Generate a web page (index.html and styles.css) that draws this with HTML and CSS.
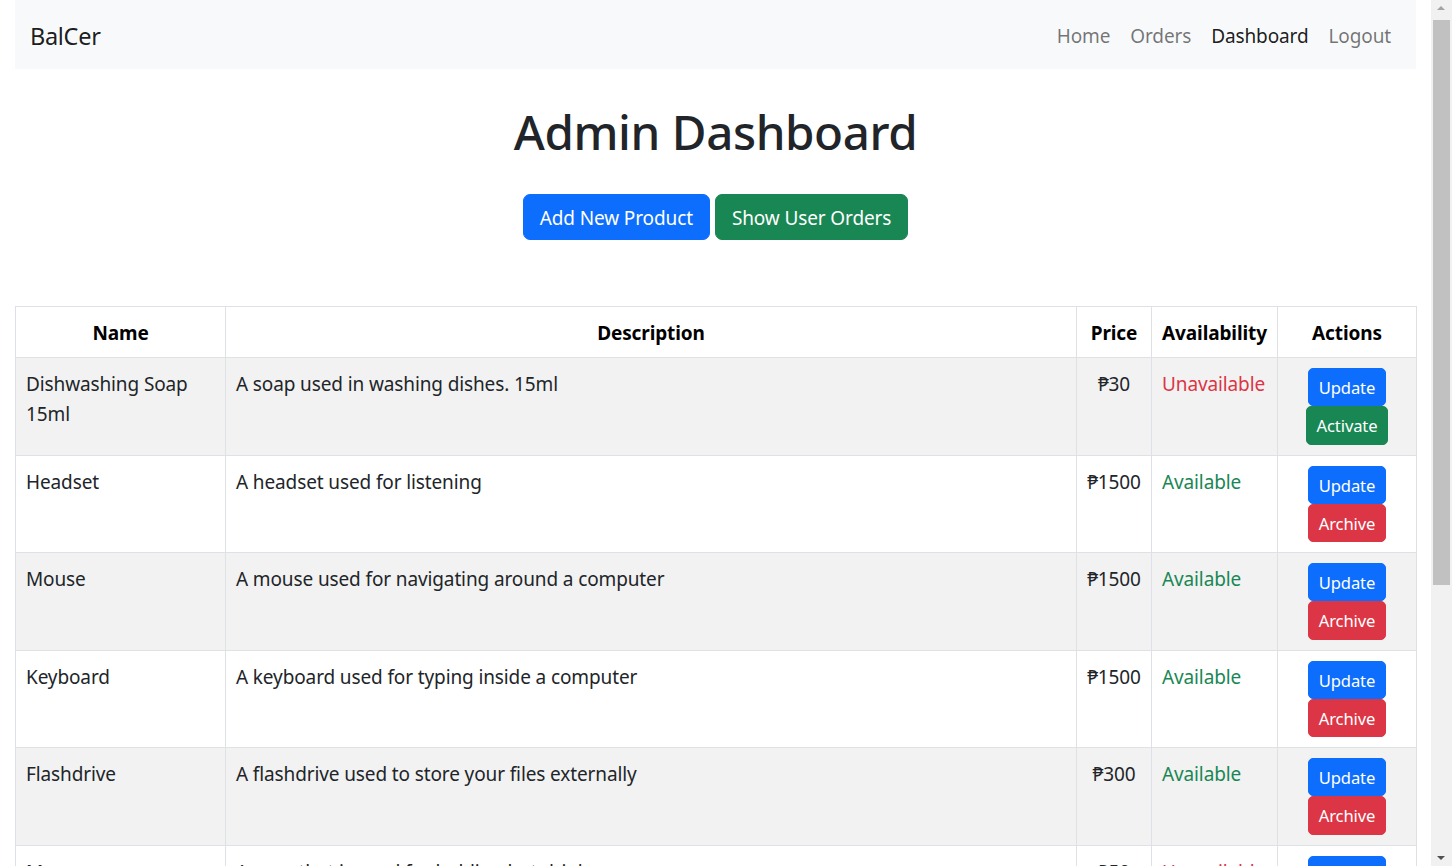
FILE: index.html
```html
<!DOCTYPE html>
<html lang="en">
<head>
<meta charset="utf-8">
<title>BalCer - Admin Dashboard</title>
<link rel="stylesheet" href="styles.css">
</head>
<body>
<div class="page">
  <nav class="navbar">
    <a class="brand" href="#">BalCer</a>
    <div class="nav-links">
      <a class="nav-link" href="#">Home</a>
      <a class="nav-link" href="#">Orders</a>
      <a class="nav-link active" href="#">Dashboard</a>
      <a class="nav-link" href="#">Logout</a>
    </div>
  </nav>

  <h1 class="title">Admin Dashboard</h1>
  <div class="top-actions">
    <button class="btn btn-primary">Add New Product</button>
    <button class="btn btn-success">Show User Orders</button>
  </div>

  <table class="products">
    <colgroup>
      <col class="c-name">
      <col class="c-desc">
      <col class="c-price">
      <col class="c-avail">
      <col class="c-act">
    </colgroup>
    <thead>
      <tr>
        <th>Name</th>
        <th>Description</th>
        <th>Price</th>
        <th>Availability</th>
        <th>Actions</th>
      </tr>
    </thead>
    <tbody>
      <tr>
        <td>Dishwashing Soap 15ml</td>
        <td>A soap used in washing dishes. 15ml</td>
        <td class="price">₱30</td>
        <td class="unavail">Unavailable</td>
        <td class="act-cell"><div class="acts"><button class="btn-sm btn-primary">Update</button><button class="btn-sm btn-success">Activate</button></div></td>
      </tr>
      <tr>
        <td>Headset</td>
        <td>A headset used for listening</td>
        <td class="price">₱1500</td>
        <td class="avail">Available</td>
        <td class="act-cell"><div class="acts"><button class="btn-sm btn-primary">Update</button><button class="btn-sm btn-danger">Archive</button></div></td>
      </tr>
      <tr>
        <td>Mouse</td>
        <td>A mouse used for navigating around a computer</td>
        <td class="price">₱1500</td>
        <td class="avail">Available</td>
        <td class="act-cell"><div class="acts"><button class="btn-sm btn-primary">Update</button><button class="btn-sm btn-danger">Archive</button></div></td>
      </tr>
      <tr>
        <td>Keyboard</td>
        <td>A keyboard used for typing inside a computer</td>
        <td class="price">₱1500</td>
        <td class="avail">Available</td>
        <td class="act-cell"><div class="acts"><button class="btn-sm btn-primary">Update</button><button class="btn-sm btn-danger">Archive</button></div></td>
      </tr>
      <tr>
        <td>Flashdrive</td>
        <td>A flashdrive used to store your files externally</td>
        <td class="price">₱300</td>
        <td class="avail">Available</td>
        <td class="act-cell"><div class="acts"><button class="btn-sm btn-primary">Update</button><button class="btn-sm btn-danger">Archive</button></div></td>
      </tr>
      <tr>
        <td>Mug</td>
        <td>A mug that is used for holding hot drinks</td>
        <td class="price">₱50</td>
        <td class="unavail">Unavailable</td>
        <td class="act-cell"><div class="acts"><button class="btn-sm btn-primary">Update</button><button class="btn-sm btn-success">Activate</button></div></td>
      </tr>
    </tbody>
  </table>
</div>
<div class="scrollbar">
  <div class="sb-arrow sb-up"></div>
  <div class="sb-track"><div class="sb-thumb"></div></div>
  <div class="sb-arrow sb-down"></div>
</div>
</body>
</html>
```

FILE: styles.css
```css
* { box-sizing: border-box; }

html, body {
  margin: 0;
  height: 866px;
  overflow: hidden;
}

body {
  display: flex;
  font-family: "Noto Sans", "Open Sans", sans-serif;
  font-size: 19px;
  letter-spacing: -0.12px;
  line-height: 30px;
  color: #212529;
  background: #fff;
}

.page {
  flex: 1;
  min-width: 0;
  padding: 0 15px;
  overflow: hidden;
}

/* Navbar */
.navbar {
  height: 69px;
  background: #f8f9fa;
  display: flex;
  align-items: center;
  justify-content: space-between;
  padding: 2px 15px 0 15px;
}

.brand {
  font-size: 23.5px;
  letter-spacing: -0.3px;
  color: rgba(0, 0, 0, 0.9);
  text-decoration: none;
  line-height: 36px;
}

.nav-links {
  display: flex;
}

.nav-link {
  padding: 0 10px;
  color: rgba(0, 0, 0, 0.55);
  text-decoration: none;
}

.nav-link.active {
  color: rgba(0, 0, 0, 0.9);
}

/* Title */
.title {
  margin: 34px 0 34px;
  text-align: center;
  font-size: 47.5px;
  font-weight: 500;
  line-height: 57px;
  letter-spacing: -0.4px;
  color: #212529;
}

.top-actions {
  display: flex;
  justify-content: center;
  gap: 5px;
}

.btn, .btn-sm {
  font-family: inherit;
  letter-spacing: inherit;
  color: #fff;
  border: 1px solid transparent;
  cursor: pointer;
}

.btn {
  font-size: 19px;
  line-height: 30px;
  padding: 8px 16px 6px;
  border-radius: 7px;
}

.btn-sm {
  font-size: 16.6px;
  line-height: 26.25px;
  padding: 6px 10px 4px;
  border-radius: 5px;
}

.btn-primary { background: #0d6efd; border-color: #0d6efd; }
.btn-success { background: #198754; border-color: #198754; }
.btn-danger  { background: #dc3545; border-color: #dc3545; }

/* Table */
.products {
  margin-top: 66px;
  width: 100%;
  border-collapse: collapse;
  table-layout: fixed;
}

.c-name  { width: 210px; }
.c-desc  { width: 851px; }
.c-price { width: 75px; }
.c-avail { width: 126px; }
.c-act   { width: 139px; }

.products th,
.products td {
  border: 1px solid #dee2e6;
  padding: 11px 10px 9px;
  vertical-align: top;
  text-align: left;
}

.products th {
  text-align: center;
  font-weight: 700;
  color: #000;
}

.products tbody tr:nth-child(odd) td {
  background: #f2f2f2;
}

.products td.price { text-align: center; }
.products td.avail { color: #198754; }
.products td.unavail { color: #dc3545; }
.products td.act-cell { padding: 10px; }

.acts {
  display: flex;
  flex-direction: column;
  align-items: center;
}

/* Fake scrollbar */
.scrollbar {
  width: 21px;
  flex: none;
  background: #f1f1f1;
  display: flex;
  flex-direction: column;
  align-items: center;
}

.sb-arrow {
  height: 17px;
  width: 100%;
  position: relative;
}

.sb-up::after,
.sb-down::after {
  content: "";
  position: absolute;
  left: 6px;
  border-left: 4.5px solid transparent;
  border-right: 4.5px solid transparent;
}

.sb-up::after {
  top: 6px;
  border-bottom: 4.5px solid #a3a3a3;
}

.sb-down::after {
  bottom: 6px;
  border-top: 4.5px solid #505050;
}

.sb-track {
  flex: 1;
  width: 100%;
  padding: 3px 2px 0;
}

.sb-thumb {
  height: 565px;
  background: #c1c1c1;
}
```
